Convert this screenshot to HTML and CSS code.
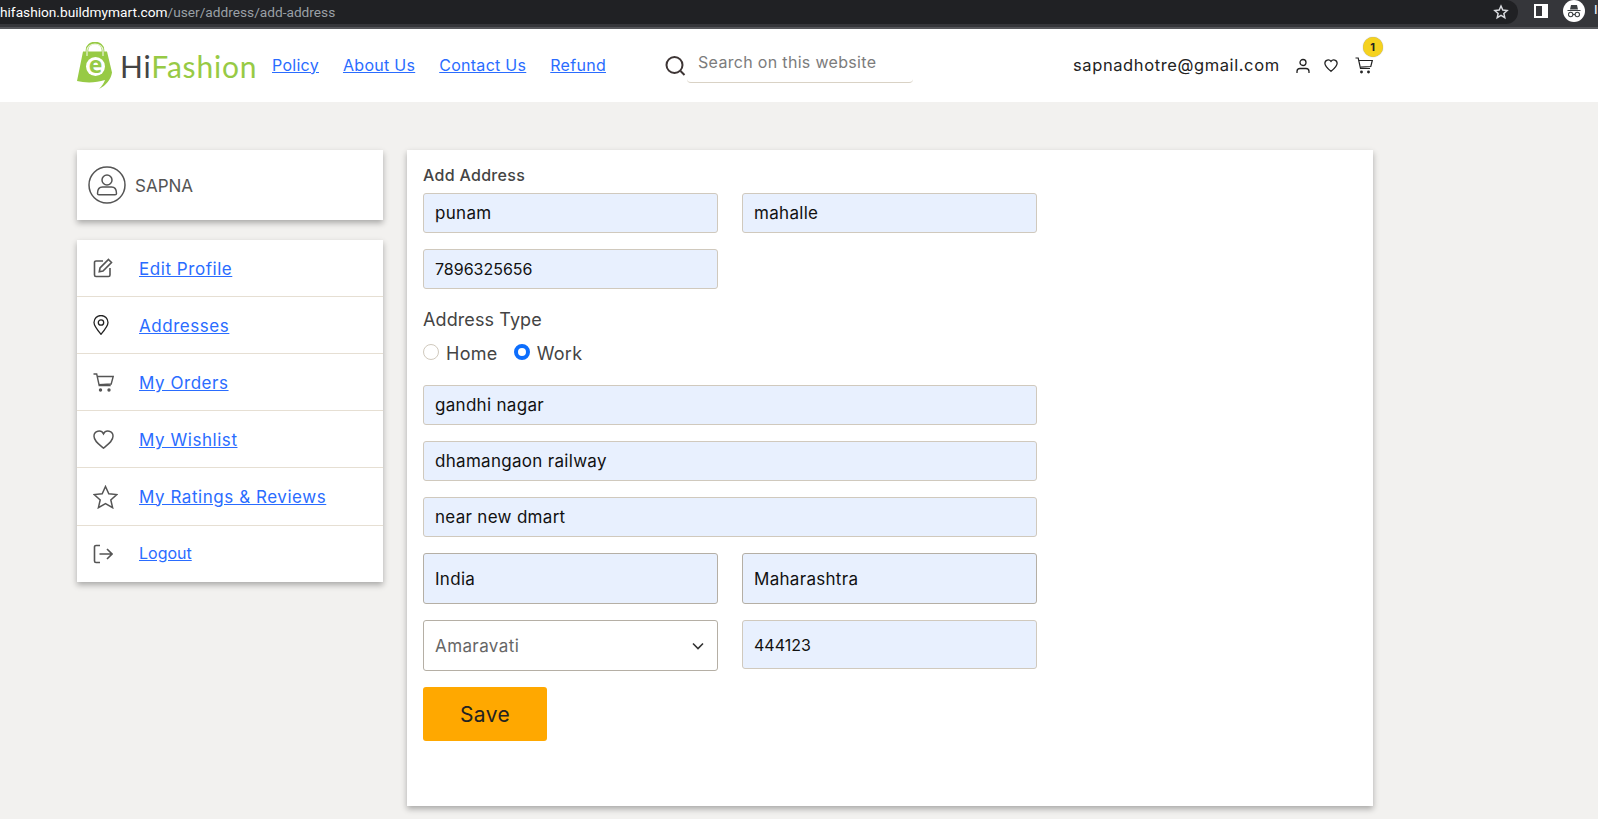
FILE: index.html
```html
<!DOCTYPE html>
<html lang="en">
<head>
    <meta charset="UTF-8">
    <title>HiFashion - Add Address</title>
    <link rel="stylesheet" href="styles.css">
</head>
<body>
    <div class="browser-bar">
        <div class="url-pill">
            <span class="url"><span class="url-host">hifashion.buildmymart.com</span>/user/address/add-address</span>
            <svg class="bar-star" width="16" height="16" viewBox="0 0 24 24" fill="none" stroke="#dadce0" stroke-width="2.2"><path d="M12 3l2.7 6 6.500.7-4.900 4.400 1.400 6.400-5.700-3.300-5.700 3.300 1.400-6.400-4.900-4.400 6.500-.7z"/></svg>
        </div>
        <div class="pane-icon"></div>
        <div class="incognito">
            <svg width="22" height="22" viewBox="0 0 22 22"><circle cx="11" cy="11" r="11" fill="#fff"/><path d="M4.500 10h13v1h-13zM7 9.500l1-4.500h6l1 4.500z" fill="#3c4043"/><circle cx="7.700" cy="14.500" r="2.200" fill="none" stroke="#3c4043" stroke-width="1.100"/><circle cx="14.300" cy="14.500" r="2.200" fill="none" stroke="#3c4043" stroke-width="1.100"/><path d="M9.900 14.500h2.200" stroke="#3c4043"/></svg>
        </div>
        <span class="incognito-label">In</span>
    </div>

    <header class="site-header">
        <a class="logo" href="#">
            <svg width="36" height="47" viewBox="0 0 36 47">
                <path d="M10 14V8a8 7 0 0 1 16 0v6" fill="none" stroke="#97ca45" stroke-width="2.600"/>
                <path d="M6 9.500h24l5 21c-1 7-6 13-13 16.500 3-3 5-6 6-9-9 3-20 3-28 1z" fill="#97ca45"/>
                <path d="M10 14V8.500a8 6.500 0 0 1 16 0V14" fill="none" stroke="#fff" stroke-width="1.200" opacity=".8"/>
                <circle cx="18.500" cy="24.500" r="9.500" fill="#fff"/>
                <text class="logo-e" x="18.500" y="31" text-anchor="middle">e</text>
            </svg>
            <span class="logo-text"><span class="logo-hi">Hi</span>Fashion</span>
        </a>
        <nav class="top-nav">
            <a href="#">Policy</a>
            <a href="#">About Us</a>
            <a href="#">Contact Us</a>
            <a href="#">Refund</a>
        </nav>
        <div class="search">
            <svg width="22" height="22" viewBox="0 0 22 22" fill="none" stroke="#3d3535" stroke-width="2"><circle cx="10.500" cy="10" r="8"/><path d="M16.500 16l4 4"/></svg>
            <input class="search-input" type="text" placeholder="Search on this website">
        </div>
        <div class="account">
            <span class="email">sapnadhotre@gmail.com</span>
            <svg width="14" height="16" viewBox="0 0 14 16" fill="none" stroke="#222" stroke-width="1.300"><circle cx="7" cy="4.500" r="3"/><path d="M1 15v-1.500c0-2 1.500-3 3-3h6c1.500 0 3 1 3 3V15"/></svg>
            <svg width="14" height="15" viewBox="0 0 24 24" fill="none" stroke="#222" stroke-width="2.200"><path d="M12 22C6 17 1.500 13 1.500 8A5.700 5.700 0 0 1 12 5a5.700 5.700 0 0 1 10.500 3c0 5-4.500 9-10.500 14z"/></svg>
            <span class="cart">
                <svg width="18" height="17" viewBox="0 0 18 17" fill="none" stroke="#222" stroke-width="1.200"><path d="M.5 1h2.700l2.300 10.500h9.500"/><path d="M3.800 3.500h13.500l-1.500 6-10 .7"/><circle cx="6.500" cy="15" r=".8" fill="#222"/><circle cx="13.500" cy="15" r=".8" fill="#222"/></svg>
                <span class="cart-badge">1</span>
            </span>
        </div>
    </header>

    <main class="page">
        <aside class="sidebar">
            <div class="card user-card">
                <svg width="38" height="38" viewBox="0 0 38 38" fill="none" stroke="#555" stroke-width="1.500"><circle cx="19" cy="19" r="18"/><circle cx="19" cy="14" r="5"/><path d="M9.500 27.500c0-4 2-6.500 5-6.500h9c3 0 5 2.500 5 6.500 0 1-.5 1.300-1.500 1.300H11c-1 0-1.500-.3-1.500-1.300z"/></svg>
                <span class="user-name">SAPNA</span>
            </div>
            <ul class="card side-menu">
                <li>
                    <span class="menu-icon"><svg width="20" height="20" viewBox="0 0 20 20" fill="none" stroke="#555" stroke-width="1.600"><path d="M10 3H3a1.500 1.500 0 0 0-1.500 1.500v12.500A1.500 1.500 0 0 0 3 18.500h12.500a1.500 1.500 0 0 0 1.500-1.500v-7"/><path d="M15.500 1.500l3 3-8.500 8.500-3.700.7.700-3.700z"/></svg></span>
                    <a href="#">Edit Profile</a>
                </li>
                <li>
                    <span class="menu-icon"><svg width="16" height="20" viewBox="0 0 16 20" fill="none" stroke="#222" stroke-width="1.300"><path d="M8 19.300C4 14.500 1 11 1 7.500a7 7 0 0 1 14 0c0 3.500-3 7-7 11.800z"/><circle cx="8" cy="7.500" r="2.700"/></svg></span>
                    <a href="#">Addresses</a>
                </li>
                <li>
                    <span class="menu-icon"><svg width="21" height="19" viewBox="0 0 21 19" fill="none" stroke="#555" stroke-width="1.400"><path d="M.5 1h3.200l2.500 11.500h11.500"/><path d="M4.200 3.500h16l-2 7.500-12.200 .8"/><circle cx="7.500" cy="17" r="1" fill="#555"/><circle cx="16" cy="17" r="1" fill="#555"/></svg></span>
                    <a href="#">My Orders</a>
                </li>
                <li>
                    <span class="menu-icon"><svg width="21" height="19" viewBox="0 0 24 22" fill="none" stroke="#555" stroke-width="1.700"><path d="M12 21C6 16 1 12.500 1 7.200A5.800 5.800 0 0 1 12 4.500a5.800 5.800 0 0 1 11 2.700C23 12.500 18 16 12 21z"/></svg></span>
                    <a href="#">My Wishlist</a>
                </li>
                <li>
                    <span class="menu-icon"><svg width="25" height="24" viewBox="0 0 25 24" fill="none" stroke="#555" stroke-width="1.500"><path d="M12.500 1.500l3.300 7.300 8 .8-6 5.300 1.800 7.800-7.100-4.100-7.100 4.100 1.800-7.800-6-5.300 8-.8z"/></svg></span>
                    <a href="#">My Ratings &amp; Reviews</a>
                </li>
                <li>
                    <span class="menu-icon"><svg width="20" height="20" viewBox="0 0 20 20" fill="none" stroke="#555" stroke-width="1.600"><path d="M7 1.500H3A1.500 1.500 0 0 0 1.500 3v14A1.500 1.500 0 0 0 3 18.500h4"/><path d="M6.500 10h12.500M14 5l5 5-5 5"/></svg></span>
                    <a class="logout" href="#">Logout</a>
                </li>
            </ul>
        </aside>

        <section class="card address-card">
            <h2>Add Address</h2>
            <form class="address-form">
                <div class="form-row">
                    <input class="field" type="text" value="punam">
                    <input class="field" type="text" value="mahalle">
                </div>
                <div class="form-row">
                    <input class="field digits" type="text" value="7896325656">
                </div>
                <div class="type-title">Address Type</div>
                <div class="type-options">
                    <label><span class="radio"></span>Home</label>
                    <label><span class="radio checked"></span>Work</label>
                </div>
                <input class="field wide" type="text" value="gandhi nagar">
                <input class="field wide" type="text" value="dhamangaon railway">
                <input class="field wide" type="text" value="near new dmart">
                <div class="form-row">
                    <input class="field tall" type="text" value="India">
                    <input class="field tall" type="text" value="Maharashtra">
                </div>
                <div class="form-row top">
                    <div class="select-box">
                        <span>Amaravati</span>
                        <svg width="12" height="8" viewBox="0 0 12 8" fill="none" stroke="#333" stroke-width="1.600"><path d="M1 1.500l5 5 5-5"/></svg>
                    </div>
                    <input class="field pincode digits" type="text" value="444123">
                </div>
                <button class="save-btn" type="button">Save</button>
            </form>
        </section>
    </main>
</body>
</html>
```

FILE: styles.css
```css
* {
    margin: 0;
    padding: 0;
    box-sizing: border-box;
}

body {
    font-family: Inter, "Open Sans", sans-serif;
    background: #f2f1ef;
    color: #333;
    height: 819px;
    overflow: hidden;
}

a {
    color: #2a6cff;
}

/* browser chrome at the top of the shot */
.browser-bar {
    display: flex;
    align-items: flex-start;
    height: 29px;
    background: #35363a;
    border-bottom: 2px solid #55565a;
    white-space: nowrap;
}

.url-pill {
    display: flex;
    flex-shrink: 0;
    align-items: center;
    justify-content: space-between;
    width: 1518px;
    height: 24px;
    background: #202124;
    border-radius: 0 12px 12px 0;
    padding-right: 9px;
}

.url {
    font-family: Roboto, sans-serif;
    font-size: 13.7px;
    color: #9aa0a6;
}

.url-host {
    color: #fff;
}

.pane-icon {
    flex-shrink: 0;
    width: 14px;
    height: 14px;
    margin: 4px 0 0 16px;
    background: #35363a;
    border: 2px solid #fff;
    border-right-width: 6px;
}

.incognito {
    flex-shrink: 0;
    margin: 0 0 0 15px;
    height: 22px;
    overflow: hidden;
}

.incognito-label {
    margin-left: 9px;
    font-family: Roboto, sans-serif;
    font-size: 13px;
    color: #fff;
    line-height: 20px;
}

/* site header */
.site-header {
    display: flex;
    align-items: center;
    height: 73px;
    padding-left: 77px;
    background: #fff;
}

.logo {
    display: flex;
    align-items: center;
    width: 195px;
    text-decoration: none;
}

.logo-e {
    font-family: "Open Sans", sans-serif;
    font-weight: 700;
    font-size: 23px;
    fill: #97ca45;
}

.logo-text {
    margin-left: 7px;
    font-family: Lato, sans-serif;
    font-size: 30px;
    color: #97ca45;
    line-height: 1;
    letter-spacing: .8px;
}

.logo-hi {
    color: #444;
}

.top-nav {
    display: flex;
    gap: 24px;
    width: 392px;
    padding-bottom: 2px;
    font-size: 16px;
    letter-spacing: .28px;
}

.search {
    display: flex;
    align-items: center;
    gap: 1px;
}

.search-input {
    width: 226px;
    height: 40px;
    margin-top: -6px;
    padding-left: 11px;
    border: none;
    border-bottom: 1px solid #d9d2c5;
    border-radius: 4px;
    outline: none;
    font: 16px Inter, sans-serif;
    letter-spacing: .32px;
}

.search-input::placeholder {
    color: #7c7c7c;
}

.account {
    display: flex;
    align-items: center;
    margin-left: 160px;
    color: #222;
}

.email {
    padding-bottom: 2px;
    font-size: 16.5px;
    margin-right: 16px;
    letter-spacing: .6px;
}

.account svg + svg {
    margin-left: 14px;
}

.cart {
    position: relative;
    display: flex;
    margin-left: 17px;
}

.cart-badge {
    position: absolute;
    top: -20px;
    left: 8px;
    width: 20px;
    height: 20px;
    border-radius: 50%;
    background: #f5d21f;
    box-shadow: 0 0 1px #888;
    font-size: 11px;
    font-weight: 700;
    line-height: 20px;
    text-align: center;
}

/* page body */
.page {
    display: flex;
    align-items: flex-start;
    gap: 24px;
    padding: 48px 0 0 77px;
}

.card {
    background: #fff;
    box-shadow: 0 3px 6px rgba(0, 0, 0, 0.3);
}

.sidebar {
    width: 306px;
}

.user-card {
    display: flex;
    align-items: center;
    gap: 9px;
    height: 70px;
    padding-left: 11px;
    margin-bottom: 20px;
}

.user-name {
    padding-top: 1px;
    font-size: 17px;
    color: #555;
}

.side-menu {
    list-style: none;
}

.side-menu li {
    display: flex;
    align-items: center;
    height: 57px;
    padding-left: 16px;
    border-bottom: 1px solid #e6dfd3;
    font-size: 17px;
}

.side-menu li:nth-child(5) {
    height: 58px;
}

.side-menu li:last-child {
    height: 56px;
    border-bottom: none;
}

.menu-icon {
    display: flex;
    width: 46px;
}

.side-menu a {
    letter-spacing: .55px;
}

.side-menu li:nth-child(-n+4) a {
    margin-top: 2px;
}

.side-menu .logout {
    margin-top: -2px;
    font-size: 16px;
    letter-spacing: 0;
}

.address-card {
    width: 966px;
    height: 656px;
    padding: 15px 0 0 16px;
}

.address-card h2 {
    font-size: 16px;
    font-weight: 500;
    color: #444;
    line-height: 20px;
    margin-bottom: 8px;
    letter-spacing: .3px;
}

.address-form {
    display: flex;
    flex-direction: column;
    width: 614px;
    gap: 16px;
}

.form-row {
    display: grid;
    grid-template-columns: 295px 295px;
    gap: 24px;
}

.form-row.top {
    align-items: start;
}

.field {
    height: 40px;
    padding: 0 11px;
    background: #e8f0fe;
    border: 1px solid #d0c9bd;
    border-radius: 3px;
    font: 17px Inter, sans-serif;
    letter-spacing: .3px;
    color: #111;
    outline: none;
}

.field.digits {
    font-size: 16px;
    letter-spacing: 0;
}

.field.wide {
    width: 614px;
}

.field.tall {
    height: 51px;
    border-color: #b5afa5;
}

.field.pincode {
    height: 49px;
}

.type-title {
    margin-top: 3px;
    font-size: 18px;
    letter-spacing: .1px;
    color: #444;
    line-height: 24px;
}

.type-options {
    display: flex;
    gap: 16px;
    margin: -6px 0 3px;
    font-size: 18px;
    letter-spacing: .3px;
    color: #444;
    line-height: 24px;
}

.type-options label {
    display: flex;
    align-items: center;
    gap: 7px;
}

.radio {
    width: 16px;
    height: 16px;
    margin-top: -4px;
    border: 1px solid #d0c9bd;
    border-radius: 50%;
}

.radio.checked {
    border: 4px solid #0d6efd;
}

.select-box {
    display: flex;
    align-items: center;
    justify-content: space-between;
    height: 51px;
    padding: 0 13px 0 11px;
    border: 1px solid #b5afa5;
    border-radius: 3px;
    font-size: 17px;
    letter-spacing: .4px;
    color: #666;
}

.save-btn {
    width: 124px;
    height: 54px;
    background: #ffa800;
    border: none;
    border-radius: 3px;
    font: 21px Inter, sans-serif;
    letter-spacing: .4px;
    color: #222;
}
```
